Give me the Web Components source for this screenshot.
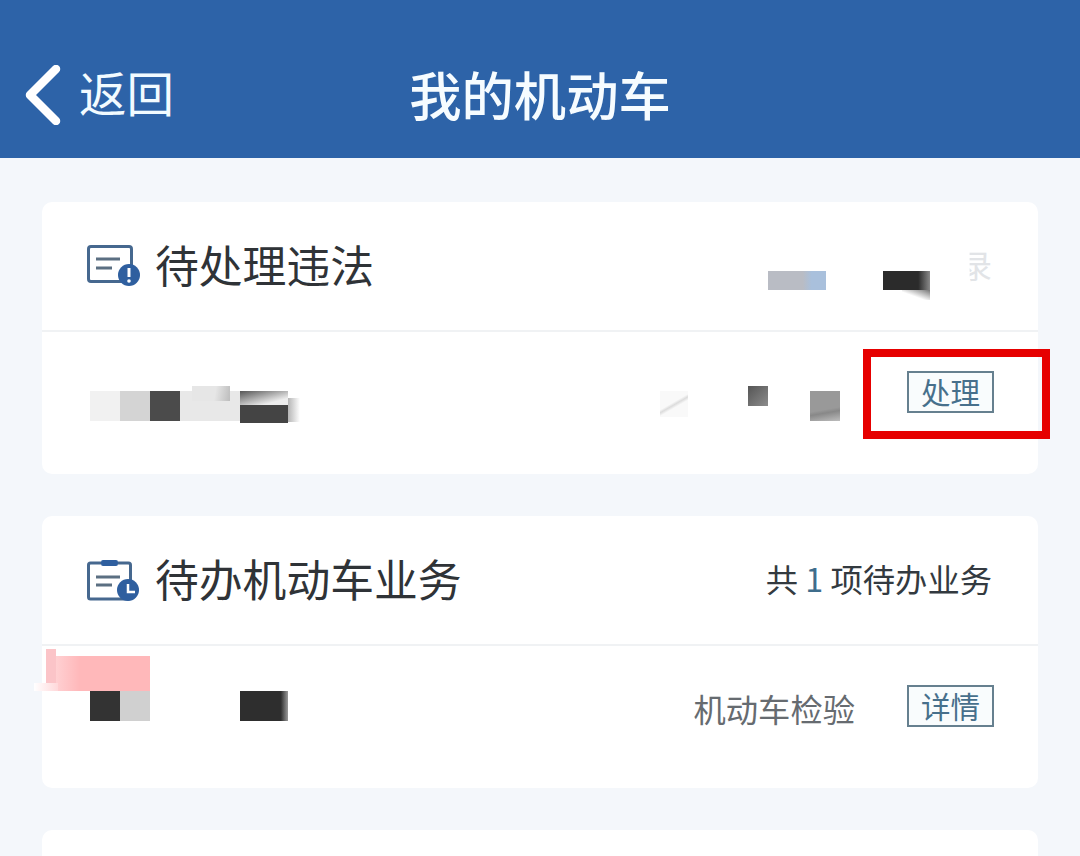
<!DOCTYPE html>
<html lang="zh-CN"><head><meta charset="utf-8"><title>我的机动车</title>
<style>
html,body{margin:0;height:100%;overflow:hidden;background:#f4f7fb;font-family:"Noto Sans CJK SC","Liberation Sans",sans-serif}
</style></head><body>
<x-app>
  <x-nav title-text="我的机动车" back="返回"></x-nav>
  <x-list>
    <x-card heading="待处理违法" icon="alert">
      <span slot="note" class="n"><x-note-fade>录</x-note-fade></span>
      <x-patch x="726" y="-61" w="58" h="19" bg="linear-gradient(90deg,#b9bcc4 0 60%,#a9c0dc 75%)"></x-patch>
      <x-patch x="841" y="-61" w="47" h="19" bg="linear-gradient(90deg,#2b2b2b 75%,#8a8a8a)"></x-patch>
      <x-patch x="860" y="-42" w="28" h="10" bg="linear-gradient(200deg,#777,#fff 60%)"></x-patch>
      <x-patch x="48" y="59" w="30" h="30" bg="#f1f1f1"></x-patch>
      <x-patch x="78" y="59" w="30" h="30" bg="#d4d4d4"></x-patch>
      <x-patch x="108" y="59" w="30" h="30" bg="#4b4b4b"></x-patch>
      <x-patch x="138" y="59" w="60" h="30" bg="#e8e8e8"></x-patch>
      <x-patch x="150" y="54" w="38" h="15" bg="linear-gradient(100deg,#e6e6e6 60%,#bcbcbc)"></x-patch>
      <x-patch x="198" y="59" w="48" h="14" bg="linear-gradient(165deg,#555,#ededed 75%)"></x-patch>
      <x-patch x="198" y="73" w="48" h="18" bg="#444"></x-patch>
      <x-patch x="246" y="66" w="12" h="24" bg="linear-gradient(90deg,#b5b5b5,#fff)"></x-patch>
      <x-patch x="618" y="59" w="28" h="26" bg="linear-gradient(150deg,#f9f9f9 45%,#dcdcdc 52%,#f9f9f9 60%)"></x-patch>
      <x-patch x="706" y="54" w="20" h="20" bg="linear-gradient(135deg,#555,#8c8c8c)"></x-patch>
      <x-patch x="768" y="59" w="30" h="30" bg="linear-gradient(170deg,#999 60%,#888 70%,#bdbdbd)"></x-patch>
      <x-action>处理</x-action>
      <x-highlight></x-highlight>
    </x-card>
    <x-card heading="待办机动车业务" icon="clock">
      <span slot="note" class="n">共 <b style="font-weight:400;color:#3f6d8c">1</b> 项待办业务</span>
      <x-patch x="14" y="10" w="94" h="35" bg="linear-gradient(90deg,#ffd0d2,#ffb8ba 25%)"></x-patch>
      <x-patch x="4" y="3" w="10" h="34" bg="#fbc4c8"></x-patch>
      <x-patch x="-8" y="37" w="24" h="8" bg="linear-gradient(90deg,#fff,#ffd8da)"></x-patch>
      <x-patch x="48" y="45" w="30" h="30" bg="#333"></x-patch>
      <x-patch x="78" y="45" w="30" h="30" bg="#d0d0d0"></x-patch>
      <x-patch x="198" y="45" w="48" h="30" bg="linear-gradient(90deg,#2e2e2e 85%,#9a9a9a)"></x-patch>
      <x-label>机动车检验</x-label>
      <x-action>详情</x-action>
    </x-card>
    <x-card></x-card>
  </x-list>
</x-app>
<script>
function def(name, css, html, extra){
  customElements.define(name, class extends HTMLElement{
    constructor(){super();this.attachShadow({mode:'open'})}
    connectedCallback(){
      this.shadowRoot.innerHTML='<style>'+css+'</style>'+(typeof html==='function'?html(this):html);
      if(extra)extra(this);
    }
  });
}
def('x-app',':host{display:block;width:1080px;height:856px;overflow:hidden;background:#f4f7fb}','<slot></slot>');
def('x-nav',
 `:host{display:grid;grid-template-columns:1fr auto 1fr;align-items:center;height:158px;background:#2d63a8;color:#fff;padding-top:32px;box-sizing:border-box}
  .b{display:flex;align-items:center;gap:18px;padding-left:25px;font-size:47.5px;font-weight:400;color:#f2fbff}
  .b span{margin-top:-7px}
  .t{font-size:52.3px;font-weight:500;line-height:64px;color:#f6fcff;margin-top:-5px}
  svg{display:block}`,
 h=>`<div class="b"><svg width="36" height="60" viewBox="0 0 36 60"><path d="M31 4 5 30l26 26" fill="none" stroke="#fff" stroke-width="8.500" stroke-linecap="round" stroke-linejoin="round"/></svg><span>${h.getAttribute('back')}</span></div><div class="t">${h.getAttribute('title-text')}</div><div></div>`);
def('x-list',':host{display:flex;flex-direction:column;gap:42px;padding:44px 42px 0}','<slot></slot>');
const ICONS={
 alert:`<svg width="56" height="44" viewBox="0 0 56 44"><rect x="2.500" y="2.500" width="43" height="35" rx="2.500" fill="none" stroke="#46688f" stroke-width="3"/><path d="M10 15h24M10 24h16" stroke="#5b6f82" stroke-width="3"/><circle cx="43" cy="31" r="11" fill="#2f5f9f"/><path d="M43 24v9" stroke="#fff" stroke-width="3"/><circle cx="43" cy="37" r="1.800" fill="#fff"/></svg>`,
 clock:`<svg width="56" height="44" viewBox="0 0 56 44"><path d="M15 5H4.500a2 2 0 0 0-2 2v32a2 2 0 0 0 2 2h38a2 2 0 0 0 2-2V7a2 2 0 0 0-2-2H32" fill="none" stroke="#46688f" stroke-width="3"/><rect x="15" y="2" width="17" height="6" rx="2" fill="#2f5f9f"/><path d="M10 19h24M10 27h16" stroke="#5b6f82" stroke-width="3"/><circle cx="42" cy="32" r="11" fill="#2f5f9f"/><path d="M42 26v8h7" fill="none" stroke="#fff" stroke-width="2.500"/></svg>`
};
def('x-card',
 `:host{display:block;height:272px;background:#fff;border-radius:10px;box-sizing:border-box}
  .h{display:flex;align-items:center;height:128px;padding:0 46px 0 44px;border-bottom:2px solid #f0f2f4;box-sizing:content-box}
  .h svg{display:block;margin-right:13px}
  .t{font-size:43.8px;line-height:56px;color:#2f3337;margin-top:-4px}
  .s{margin-left:auto;font-size:32.3px;color:#333a40;white-space:pre;margin-top:-4px}
  .r{position:relative;display:flex;align-items:center;justify-content:flex-end;gap:52px;height:142px;padding:0 44px;box-sizing:border-box}`,
 h=>{const ic=h.getAttribute('icon');const t=h.getAttribute('heading');
  return `<div class="h">${ic?ICONS[ic]:''}<span class="t">${t||''}</span><span class="s"><slot name="note"></slot></span></div><div class="r"><slot></slot></div>`});
def('x-patch',':host{position:absolute;display:block}','',h=>{
  const a=k=>h.getAttribute(k);
  Object.assign(h.style,{left:a('x')+'px',top:a('y')+'px',width:a('w')+'px',height:a('h')+'px',background:a('bg')});
});
def('x-action',
 `:host{display:flex;align-items:center;justify-content:center;width:87px;height:42px;box-sizing:border-box;border:2px solid #66808f;background:#f9fcfd;color:#47708c;font-size:29.5px;line-height:1;margin-top:-23px}`,
 '<slot></slot>');
def('x-label',':host{display:block;font-size:32.3px;color:#666b70;margin-top:-18px}','<slot></slot>');
def('x-note-fade',':host{display:inline-block;color:#e2e4e7;font-size:32px;clip-path:inset(0 0 0 30%)}','<slot></slot>');
def('x-highlight',':host{position:absolute;left:821px;top:17px;width:187px;height:90px;box-sizing:border-box;border:8px solid #e60000;pointer-events:none}','');
</script>
</body></html>
